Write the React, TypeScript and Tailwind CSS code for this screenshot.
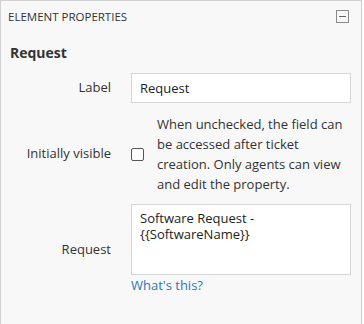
import { useState } from "react";

const font = { fontFamily: '"Segoe UI", "Open Sans", "Noto Sans", sans-serif' };

const Row = ({ label, children, className = "" }: { label: string; children: React.ReactNode; className?: string }) => (
  <div className={`flex items-center ${className}`}>
    <div className="w-[110px] shrink-0 text-right text-[13px] text-[#333]">{label}</div>
    <div className="ml-[20px] w-[220px]">{children}</div>
  </div>
);

const App = () => {
  const [visible, setVisible] = useState(false);

  return (
    <div className="w-[364px] h-[324px] bg-white" style={font}>
      <div className="w-[362px] h-[324px] bg-[#f8f8f8] border-l border-t border-r border-[#d0d0d0]">
        {/* header */}
        <div className="flex items-center justify-between pl-[7px] pr-[12px] h-[31px]">
          <span className="text-[11.5px] text-[#333]">ELEMENT PROPERTIES</span>
          <span className="w-[13px] h-[13px] -mt-[1px] border border-[#8a8a8a] flex items-center justify-center">
            <span className="w-[7px] h-px bg-[#666]" />
          </span>
        </div>

        <div className="pl-[9px] pt-[10px] text-[14px] font-bold text-[#333]">Request</div>

        <Row label="Label" className="mt-[10px]">
          <input
            defaultValue="Request"
            className="w-[220px] h-[30px] bg-white border border-[#d6d6d6] px-[8px] text-[13px] text-[#222] outline-none"
          />
        </Row>

        <Row label="Initially visible" className="mt-[11px]">
          <div className="flex items-center">
            <input
              type="checkbox"
              checked={visible}
              onChange={() => setVisible(!visible)}
              className="w-[13px] h-[13px] appearance-none border border-[#555] rounded-[2px] bg-white shrink-0"
            />
            <p className="ml-[13px] text-[13px] leading-[20px] text-[#333]">
              When unchecked, the field can be accessed after ticket creation. Only agents can view and edit the
              property.
            </p>
          </div>
        </Row>

        <Row label="Request" className="mt-[10px]">
          <textarea
            defaultValue={"Software Request -\n{{SoftwareName}}"}
            className="block w-[220px] h-[71px] bg-white border border-[#d6d6d6] px-[8px] py-[5px] text-[13px] leading-[16px] text-[#222] resize-none outline-none"
          />
          <a href="#" className="block text-[13px] leading-[20px] text-[#2a7ab5]">
            What's this?
          </a>
        </Row>
      </div>
    </div>
  );
};

export default App;
